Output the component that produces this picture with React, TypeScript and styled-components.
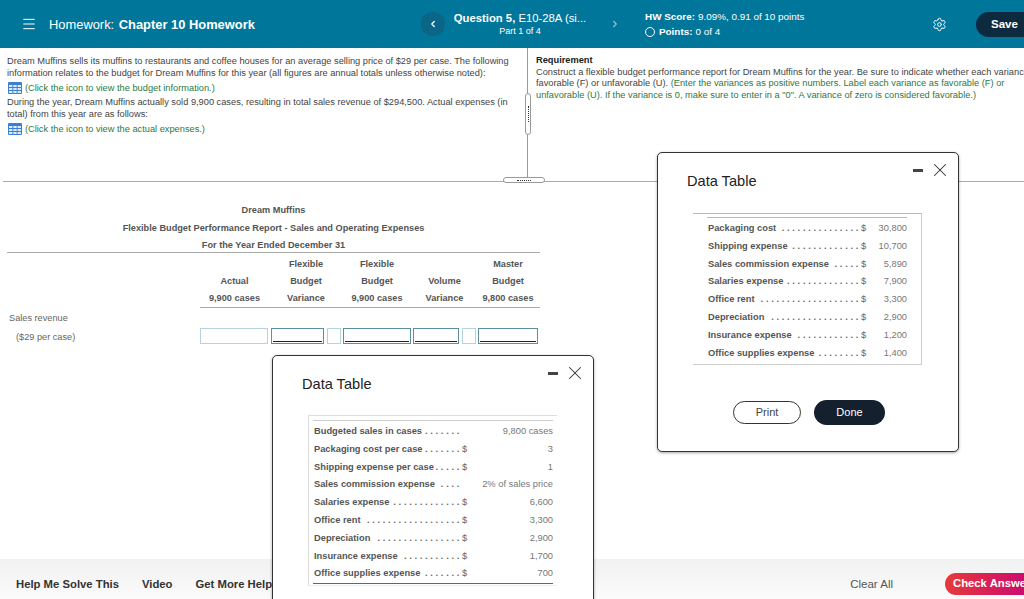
import React from 'react';
import styled, {createGlobalStyle} from "styled-components";
import {ChevronLeft, ChevronRight, Menu, Settings, X} from "lucide-react";

const GlobalStyle = createGlobalStyle`
  html, body {
    margin: 0;
    padding: 0;
    height: 100%;
    background: #fff;
    font-family: "Liberation Sans", Arial, sans-serif;
  }
`

const GridIcon = () => (
    <svg width="14" height="12" viewBox="0 0 14 12">
        <rect x="0" y="0" width="14" height="12" rx="1" fill="#3b7fd4"/>
        <g fill="#dbe9fb">
            <rect x="1" y="3" width="3.4" height="2"/>
            <rect x="5.3" y="3" width="3.4" height="2"/>
            <rect x="9.6" y="3" width="3.4" height="2"/>
            <rect x="1" y="6" width="3.4" height="2"/>
            <rect x="5.3" y="6" width="3.4" height="2"/>
            <rect x="9.6" y="6" width="3.4" height="2"/>
            <rect x="1" y="9" width="3.4" height="2"/>
            <rect x="5.3" y="9" width="3.4" height="2"/>
            <rect x="9.6" y="9" width="3.4" height="2"/>
        </g>
    </svg>
)

type DataRowType = {label: string, dots: number, dollar?: boolean, value: string}

const budgetRows: Array<DataRowType> = [
    {label: "Budgeted sales in cases", dots: 7, value: "9,800 cases"},
    {label: "Packaging cost per case", dots: 7, dollar: true, value: "3"},
    {label: "Shipping expense per case", dots: 5, dollar: true, value: "1"},
    {label: "Sales commission expense", dots: 4, value: "2% of sales price"},
    {label: "Salaries expense", dots: 13, dollar: true, value: "6,600"},
    {label: "Office rent", dots: 18, dollar: true, value: "3,300"},
    {label: "Depreciation", dots: 16, dollar: true, value: "2,900"},
    {label: "Insurance expense", dots: 11, dollar: true, value: "1,700"},
    {label: "Office supplies expense", dots: 7, dollar: true, value: "700"},
]

const actualRows: Array<DataRowType> = [
    {label: "Packaging cost", dots: 15, dollar: true, value: "30,800"},
    {label: "Shipping expense", dots: 13, dollar: true, value: "10,700"},
    {label: "Sales commission expense", dots: 5, dollar: true, value: "5,890"},
    {label: "Salaries expense", dots: 14, dollar: true, value: "7,900"},
    {label: "Office rent", dots: 19, dollar: true, value: "3,300"},
    {label: "Depreciation", dots: 17, dollar: true, value: "2,900"},
    {label: "Insurance expense", dots: 12, dollar: true, value: "1,200"},
    {label: "Office supplies expense", dots: 8, dollar: true, value: "1,400"},
]

const DataRows = (props: {rows: Array<DataRowType>}) => (
    <>
        {props.rows.map((row, index) => (
            <DataRow key={index}>
                <RowLabel>{row.label}<Dots>{".".repeat(row.dots)}</Dots></RowLabel>
                <Dollar>{row.dollar ? "$" : ""}</Dollar>
                <RowValue>{row.value}</RowValue>
            </DataRow>
        ))}
    </>
)

export default function App() {
    return (
        <Page>
            <GlobalStyle/>
            <Header>
                <HeaderLeft>
                    <Menu size={16} strokeWidth={1.5}/>
                    <HeaderTitle>Homework: <b>Chapter 10 Homework</b></HeaderTitle>
                </HeaderLeft>
                <QuestionNav>
                    <RoundButton $dark><ChevronLeft size={10} strokeWidth={3}/></RoundButton>
                    <QuestionInfo>
                        <QuestionName><b>Question 5,</b> E10-28A (si...</QuestionName>
                        <QuestionPart>Part 1 of 4</QuestionPart>
                    </QuestionInfo>
                    <RoundButton><ChevronRight size={10} strokeWidth={3}/></RoundButton>
                </QuestionNav>
                <Score>
                    <ScoreLine><b>HW Score:</b> 9.09%, 0.91 of 10 points</ScoreLine>
                    <ScoreLine><Circle/><b>Points:</b> 0 of 4</ScoreLine>
                </Score>
                <GearSlot><Settings size={15} strokeWidth={1.6}/></GearSlot>
                <SaveButton>Save</SaveButton>
            </Header>

            <TopPane>
                <LeftPane>
                    <Paragraph>Dream Muffins sells its muffins to restaurants and coffee houses for an average selling price of $29 per case. The following information relates to the budget for Dream Muffins for this year (all figures are annual totals unless otherwise noted):</Paragraph>
                    <IconLine><GridIcon/><span>(Click the icon to view the budget information.)</span></IconLine>
                    <Paragraph>During the year, Dream Muffins actually sold 9,900 cases, resulting in total sales revenue of $294,500. Actual expenses (in total) from this year are as follows:</Paragraph>
                    <IconLine><GridIcon/><span>(Click the icon to view the actual expenses.)</span></IconLine>
                </LeftPane>
                <RightPane>
                    <b>Requirement</b><br/>
                    <NoWrapLine>Construct a flexible budget performance report for Dream Muffins for the year. Be sure to indicate whether each variance is</NoWrapLine>
                    <NoWrapLine>favorable (F) or unfavorable (U). <Green>(Enter the variances as positive numbers. Label each variance as favorable (F) or</Green></NoWrapLine>
                    <NoWrapLine><Green>unfavorable (U). If the variance is 0, make sure to enter in a "0". A variance of zero is considered favorable.)</Green></NoWrapLine>
                </RightPane>
                <VerticalHandle>
                    <HandleDots $vertical/>
                </VerticalHandle>
                <HorizontalHandle>
                    <HandleDots/>
                </HorizontalHandle>
            </TopPane>

            <Report>
                <ReportTitle>Dream Muffins</ReportTitle>
                <ReportTitle>Flexible Budget Performance Report - Sales and Operating Expenses</ReportTitle>
                <ReportTitle $rule>For the Year Ended December 31</ReportTitle>
                <ReportHead>
                    <HeadCell $col={2}>Flexible</HeadCell>
                    <HeadCell $col={3}>Flexible</HeadCell>
                    <HeadCell $col={5}>Master</HeadCell>
                    <HeadCell $col={1}>Actual</HeadCell>
                    <HeadCell>Budget</HeadCell>
                    <HeadCell>Budget</HeadCell>
                    <HeadCell>Volume</HeadCell>
                    <HeadCell>Budget</HeadCell>
                    <HeadCell>9,900 cases</HeadCell>
                    <HeadCell>Variance</HeadCell>
                    <HeadCell>9,900 cases</HeadCell>
                    <HeadCell>Variance</HeadCell>
                    <HeadCell>9,800 cases</HeadCell>
                </ReportHead>
                <SalesLabel>Sales revenue</SalesLabel>
                <SalesRow>
                    <SalesPrice>($29 per case)</SalesPrice>
                    <AnswerBox $width={68} $gap={3}/>
                    <AnswerBox $width={53} $gap={3} $active/>
                    <AnswerBox $width={14} $gap={2}/>
                    <AnswerBox $width={68} $gap={2} $active/>
                    <AnswerBox $width={46} $gap={3} $active/>
                    <AnswerBox $width={14} $gap={2}/>
                    <AnswerBox $width={60} $gap={0} $active/>
                </SalesRow>
            </Report>

            <Footer>
                <FooterLink>Help Me Solve This</FooterLink>
                <FooterLink>Video</FooterLink>
                <FooterLink>Get More Help</FooterLink>
                <ClearAll>Clear All</ClearAll>
                <CheckButton>Check Answer</CheckButton>
            </Footer>

            <BudgetDialog>
                <DialogControls><Dash/><X size={22} strokeWidth={1.1}/></DialogControls>
                <DialogTitle>Data Table</DialogTitle>
                <BudgetTable>
                    <BudgetRows>
                        <DataRows rows={budgetRows}/>
                    </BudgetRows>
                </BudgetTable>
            </BudgetDialog>

            <ActualDialog>
                <DialogControls><Dash/><X size={22} strokeWidth={1.1}/></DialogControls>
                <DialogTitle>Data Table</DialogTitle>
                <ActualTable>
                    <ActualRows>
                        <DataRows rows={actualRows}/>
                    </ActualRows>
                </ActualTable>
                <DialogButtons>
                    <PrintButton>Print</PrintButton>
                    <DoneButton>Done</DoneButton>
                </DialogButtons>
            </ActualDialog>
        </Page>
    );
}

const Page = styled.div`
  position: relative;
  width: 1024px;
  height: 599px;
  overflow: hidden;
  display: flex;
  flex-direction: column;
  background: #fff;
`

const Header = styled.header`
  flex: 0 0 48px;
  display: flex;
  align-items: center;
  background-color: #01769b;
  color: #fff;
  padding-left: 21px;
  box-sizing: border-box;
`

const HeaderLeft = styled.div`
  flex: 0 0 400px;
  display: flex;
  align-items: center;
  gap: 12px;
`

const HeaderTitle = styled.div`
  font-size: 12.9px;
  b {
    margin-left: 1px;
  }
`

const QuestionNav = styled.div`
  flex: 0 0 224px;
  display: flex;
  align-items: center;
`

const RoundButton = styled.div<{$dark?: boolean}>`
  flex: 0 0 24px;
  height: 24px;
  border-radius: 50%;
  display: flex;
  align-items: center;
  justify-content: center;
  background-color: ${props => props.$dark ? "#0b6586" : "transparent"};
  color: ${props => props.$dark ? "#fff" : "#8fc4d6"};
`

const QuestionInfo = styled.div`
  flex: 0 0 150px;
  margin-right: 8px;
  text-align: center;
`

const QuestionName = styled.div`
  font-size: 11.3px;
  white-space: nowrap;
  line-height: 14px;
`

const QuestionPart = styled.div`
  font-size: 9px;
  line-height: 13px;
`

const Score = styled.div`
  flex: 0 0 287px;
  font-size: 9.9px;
  display: flex;
  flex-direction: column;
  gap: 2px;
`

const ScoreLine = styled.div`
  display: flex;
  align-items: center;
  gap: 3px;
  line-height: 13px;
  white-space: nowrap;
`

const Circle = styled.span`
  width: 8px;
  height: 8px;
  border: 1.5px solid #fff;
  border-radius: 50%;
  margin-right: 1px;
`

const GearSlot = styled.div`
  flex: 0 0 15px;
  display: flex;
`

const SaveButton = styled.div`
  margin-left: 29px;
  flex: 0 0 62px;
  height: 25px;
  border-radius: 13px;
  background-color: #0e2a3f;
  font-size: 11.5px;
  font-weight: bold;
  line-height: 25px;
  padding-left: 15px;
  box-sizing: border-box;
`

const TopPane = styled.section`
  position: relative;
  flex: 0 0 134px;
  display: flex;
  margin-left: 3px;
  border-bottom: 1px solid #aaa;
  box-sizing: border-box;
  font-size: 9.25px;
  color: #444;
`

const LeftPane = styled.div`
  flex: 0 0 525px;
  box-sizing: border-box;
  padding: 7px 15px 0 4px;
  border-right: 1px solid #999;
`

const Paragraph = styled.p`
  margin: 0;
  line-height: 12px;
`

const IconLine = styled.div`
  display: flex;
  align-items: center;
  gap: 3px;
  height: 15px;
  margin: 1px 0 1px 1px;
  color: #2c7a3c;
`

const RightPane = styled.div`
  flex: 1;
  min-width: 0;
  padding: 7px 0 0 8px;
  line-height: 11.5px;
  overflow: hidden;
  b {
    color: #222;
  }
`

const NoWrapLine = styled.div`
  white-space: nowrap;
`

const Green = styled.span`
  color: #2c7a3c;
`

const VerticalHandle = styled.div`
  position: absolute;
  left: 522px;
  top: 45px;
  width: 4px;
  height: 40px;
  border: 1px solid #999;
  border-radius: 3px;
  background: #fff;
  display: flex;
  align-items: center;
  justify-content: center;
`

const HorizontalHandle = styled.div`
  position: absolute;
  left: 500px;
  top: 129px;
  width: 40px;
  height: 4px;
  border: 1px solid #999;
  border-radius: 4px;
  background: #fff;
  display: flex;
  align-items: center;
  justify-content: center;
`

const HandleDots = styled.span<{$vertical?: boolean}>`
  ${props => props.$vertical
    ? "height: 16px; border-left: 1px dotted #333;"
    : "width: 14px; border-top: 1px dotted #333;"}
`

const Report = styled.section`
  flex: 1;
  width: 533px;
  margin-left: 7px;
  padding-top: 20px;
  color: #555;
  font-size: 9.2px;
`

const ReportTitle = styled.div<{$rule?: boolean}>`
  height: ${props => props.$rule ? "15px" : "17.5px"};
  line-height: 17px;
  text-align: center;
  font-weight: bold;
  border-bottom: ${props => props.$rule ? "1px solid #aaa" : "none"};
  box-sizing: ${props => props.$rule ? "content-box" : "border-box"};
`

const ReportHead = styled.div`
  display: grid;
  grid-template-columns: 71px 72px 70px 65px 62px;
  grid-auto-rows: 17px;
  margin-left: 193px;
  padding-top: 3px;
  border-bottom: 1px solid #aaa;
`

const HeadCell = styled.div<{$col?: number}>`
  grid-column: ${props => props.$col ?? "auto"};
  text-align: center;
  line-height: 17px;
  font-weight: bold;
  white-space: nowrap;
  padding-right: 2px;
`

const SalesLabel = styled.div`
  margin-left: 2px;
  margin-top: 4px;
  height: 13px;
  line-height: 13px;
  color: #666;
`

const SalesRow = styled.div`
  display: flex;
  align-items: flex-end;
  height: 19px;
`

const SalesPrice = styled.div`
  flex: 0 0 193px;
  padding-left: 9px;
  box-sizing: border-box;
  line-height: 13px;
  color: #666;
`

const AnswerBox = styled.div<{$width: number, $gap: number, $active?: boolean}>`
  flex: 0 0 ${props => props.$width}px;
  margin-right: ${props => props.$gap}px;
  height: 16px;
  box-sizing: border-box;
  border: 1px solid ${props => props.$active ? "#5d8f9e" : "#b5d3dc"};
  position: relative;
  &::after {
    content: "";
    display: ${props => props.$active ? "block" : "none"};
    position: absolute;
    left: 1px;
    right: 1px;
    bottom: 1px;
    height: 1px;
    background: #222;
  }
`

const Footer = styled.footer`
  flex: 0 0 40px;
  display: flex;
  align-items: center;
  background: linear-gradient(#f1f1f1, #fbfbfb);
  padding: 10px 0 0 16px;
  box-sizing: border-box;
  white-space: nowrap;
`

const FooterLink = styled.span`
  font-size: 11.3px;
  font-weight: bold;
  color: #333;
  margin-right: 23px;
`

const ClearAll = styled.span`
  margin-left: auto;
  font-size: 11.5px;
  color: #555;
`

const CheckButton = styled.div`
  margin-left: 52px;
  margin-right: -21px;
  flex: 0 0 100px;
  height: 22px;
  border-radius: 11px;
  background: linear-gradient(90deg, #e63a3a, #c4007c);
  color: #fff;
  font-size: 11.3px;
  font-weight: bold;
  line-height: 21px;
  padding-left: 8px;
  box-sizing: border-box;
`

const Dialog = styled.div`
  position: absolute;
  box-sizing: border-box;
  background: #fff;
  border: 1.5px solid #333;
  border-radius: 5px;
  box-shadow: 0 1px 3px rgba(0, 0, 0, 0.35);
  padding: 19px 0 0 29px;
`

const BudgetDialog = styled(Dialog)`
  left: 272px;
  top: 355px;
  width: 322px;
  height: 260px;
`

const ActualDialog = styled(Dialog)`
  left: 657px;
  top: 152px;
  width: 302px;
  height: 300px;
`

const DialogControls = styled.div`
  position: absolute;
  top: 6px;
  right: 7px;
  display: flex;
  align-items: center;
  gap: 6px;
  color: #333;
`

const Dash = styled.span`
  width: 10px;
  height: 3px;
  background: #444;
`

const DialogTitle = styled.h2`
  margin: 0;
  font-size: 14.6px;
  font-weight: normal;
  line-height: 18px;
  color: #222;
`

const DataBox = styled.div`
  box-sizing: border-box;
  margin-left: 6px;
  font-size: 9.3px;
  color: #555;
`

const BudgetTable = styled(DataBox)`
  width: 249px;
  height: 171px;
  margin-top: 22px;
  padding: 4px 4px 0 4px;
  border-top: 1px solid #ddd;
  border-left: 1px solid #ddd;
  border-bottom: 1px solid #eee;
  --label-width: 148px;
  --dollar-width: 10px;
`

const ActualTable = styled(DataBox)`
  width: 229px;
  height: 152px;
  margin-top: 23px;
  padding: 3px 14px 0 14px;
  border-top: 1px solid #bbb;
  border-right: 1px solid #ccc;
  border-bottom: 1px solid #ccc;
  --label-width: 153px;
  --dollar-width: 8px;
`

const BudgetRows = styled.div`
  height: 160px;
  padding-top: 2px;
  border-top: 1px solid #ccc;
  border-bottom: 1px solid #666;
`

const ActualRows = styled.div`
  padding-top: 2px;
  border-top: 1px solid #bbb;
`

const DataRow = styled.div`
  display: grid;
  grid-template-columns: var(--label-width) var(--dollar-width) 1fr;
  height: 17.8px;
  line-height: 17.8px;
  padding-left: 1px;
  white-space: nowrap;
`

const RowLabel = styled.span`
  display: flex;
  justify-content: space-between;
  font-weight: bold;
  overflow: hidden;
`

const Dots = styled.span`
  letter-spacing: 2.7px;
  color: #666;
`

const Dollar = styled.span`
  color: #666;
`

const RowValue = styled.span`
  text-align: right;
  color: #777;
`

const DialogButtons = styled.div`
  display: flex;
  align-items: center;
  gap: 13px;
  margin: 35px 0 0 46px;
`

const PrintButton = styled.div`
  width: 68px;
  height: 23px;
  box-sizing: border-box;
  border: 1.5px solid #333;
  border-radius: 12px;
  text-align: center;
  font-size: 11px;
  line-height: 20px;
  color: #444;
`

const DoneButton = styled.div`
  width: 71px;
  height: 25px;
  border-radius: 13px;
  background: #14202e;
  color: #fff;
  text-align: center;
  font-size: 11px;
  line-height: 25px;
`
